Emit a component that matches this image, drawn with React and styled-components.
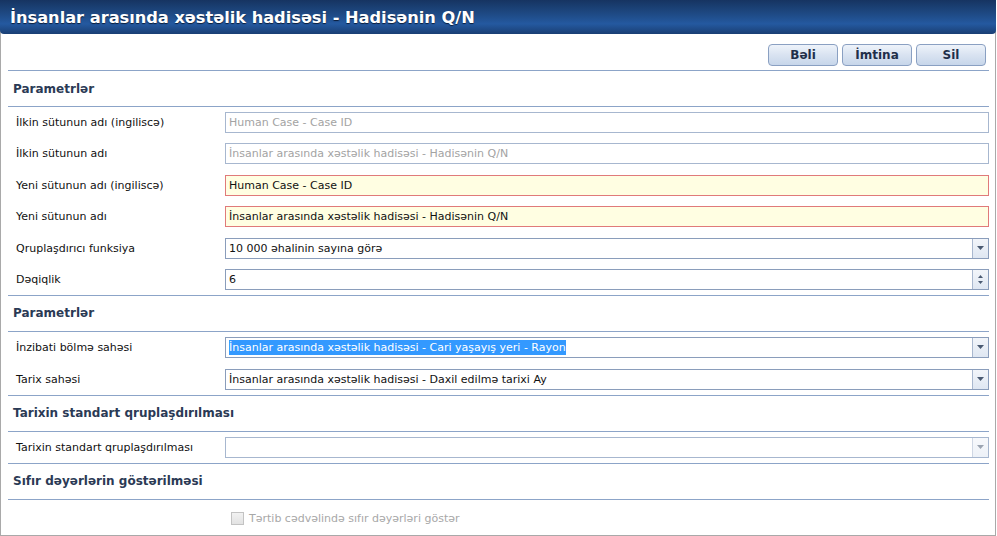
import React from "react";
import styled, { createGlobalStyle } from "styled-components";

const GlobalStyle = createGlobalStyle`
  body {
    margin: 0;
    background: #ffffff;
    font-family: "DejaVu Sans", Verdana, sans-serif;
  }
`;

const Window = styled.div`
  width: 994px;
  height: 535px;
  border: 1px solid #a9a9a9;
  border-top: none;
  display: flex;
  flex-direction: column;
`;

const TitleBar = styled.div`
  height: 34px;
  margin: 0 -1px;
  padding: 0 10px;
  display: flex;
  align-items: center;
  border-radius: 0 0 4px 4px;
  background: linear-gradient(#163461 0%, #1f4c88 45%, #2459a0 70%, #1a3f74 100%);
  color: #ffffff;
  font-size: 16.2px;
  font-weight: bold;
  text-shadow: 0 1px 1px #0b1d3a;
`;

const Content = styled.div`
  padding: 10px 6px 0 7px;
  display: flex;
  flex-direction: column;
`;

const Toolbar = styled.div`
  display: flex;
  justify-content: flex-end;
  gap: 4px;
  padding-right: 3px;
  padding-bottom: 4px;
  border-bottom: 1px solid #8ca4c8;
`;

const Button = styled.button`
  width: 70px;
  height: 22px;
  border: 1px solid #8aa0c2;
  border-radius: 4px;
  background: linear-gradient(#eef3fa, #d9e3f1 50%, #c7d6ea);
  color: #1f2f4a;
  font-family: inherit;
  font-size: 12px;
  font-weight: bold;
  padding: 0;
`;

const SectionHeader = styled.div`
  height: 35px;
  padding-left: 5px;
  display: flex;
  align-items: center;
  border-bottom: 1px solid #8ca4c8;
  color: #2b3a55;
  font-size: 12px;
  font-weight: bold;
`;

const Section = styled.div`
  padding: 5px 0 5px;
  display: flex;
  flex-direction: column;
  gap: ${(p) => p.$gap || 10}px;
  border-bottom: 1px solid #8ca4c8;
`;

const Row = styled.div`
  display: grid;
  grid-template-columns: 217px 1fr;
  align-items: center;
  height: 21px;
`;

const Label = styled.div`
  padding-left: 8px;
  font-size: 11px;
  color: #111111;
`;

const Field = styled.div`
  height: 19px;
  display: flex;
  align-items: center;
  border: 1px solid ${(p) => (p.$required ? "#e07a7a" : p.$disabled ? "#a7b7cf" : "#8a9dbb")};
  background: ${(p) => (p.$required ? "#fffee2" : "#ffffff")};
  color: ${(p) => (p.$disabled ? "#a3a3a3" : "#111111")};
  font-size: 11px;
  overflow: hidden;
`;

const FieldText = styled.span`
  flex: 1;
  padding-left: 3px;
  white-space: nowrap;
`;

const Selected = styled.span`
  background: #3399ff;
  color: #ffffff;
  padding: 1px 0;
`;

const SideButton = styled.div`
  width: 15px;
  align-self: stretch;
  border-left: 1px solid #a9b8cf;
  background: linear-gradient(#f2f5fa, #dfe7f2);
  display: flex;
  flex-direction: column;
  align-items: center;
  justify-content: center;
  gap: 3px;
  opacity: ${(p) => (p.$disabled ? 0.55 : 1)};
`;

const Arrow = ({ up, small }) => (
  <svg width={small ? 5 : 7} height={small ? 3 : 4} viewBox="0 0 7 4">
    <path d={up ? "M0 4 L3.5 0 L7 4 Z" : "M0 0 L7 0 L3.5 4 Z"} fill="#4a5a72" />
  </svg>
);

const CheckRow = styled.label`
  display: flex;
  align-items: center;
  gap: 5px;
  padding: 12px 0 0 223px;
  color: #a8a8a8;
  font-size: 11px;
`;

const Box = styled.span`
  width: 11px;
  height: 11px;
  border: 1px solid #c3c3c3;
  background: linear-gradient(#f2f2f2, #e2e2e2);
`;

function Select({ children, disabled }) {
  return (
    <Field $disabled={disabled}>
      <FieldText>{children}</FieldText>
      <SideButton $disabled={disabled}>
        <Arrow />
      </SideButton>
    </Field>
  );
}

export default function App() {
  return (
    <>
      <GlobalStyle />
      <Window>
        <TitleBar>İnsanlar arasında xəstəlik hadisəsi - Hadisənin Q/N</TitleBar>
        <Content>
          <Toolbar>
            <Button>Bəli</Button>
            <Button>İmtina</Button>
            <Button>Sil</Button>
          </Toolbar>

          <SectionHeader>Parametrlər</SectionHeader>
          <Section $gap={10.4}>
            <Row>
              <Label>İlkin sütunun adı (ingiliscə)</Label>
              <Field $disabled><FieldText>Human Case - Case ID</FieldText></Field>
            </Row>
            <Row>
              <Label>İlkin sütunun adı</Label>
              <Field $disabled><FieldText>İnsanlar arasında xəstəlik hadisəsi - Hadisənin Q/N</FieldText></Field>
            </Row>
            <Row>
              <Label>Yeni sütunun adı (ingiliscə)</Label>
              <Field $required><FieldText>Human Case - Case ID</FieldText></Field>
            </Row>
            <Row>
              <Label>Yeni sütunun adı</Label>
              <Field $required><FieldText>İnsanlar arasında xəstəlik hadisəsi - Hadisənin Q/N</FieldText></Field>
            </Row>
            <Row>
              <Label>Qruplaşdırıcı funksiya</Label>
              <Select>10 000 əhalinin sayına görə</Select>
            </Row>
            <Row>
              <Label>Dəqiqlik</Label>
              <Field>
                <FieldText>6</FieldText>
                <SideButton>
                  <Arrow up small />
                  <Arrow small />
                </SideButton>
              </Field>
            </Row>
          </Section>

          <SectionHeader>Parametrlər</SectionHeader>
          <Section $gap={11}>
            <Row>
              <Label>İnzibati bölmə sahəsi</Label>
              <Select>
                <Selected>İnsanlar arasında xəstəlik hadisəsi - Cari yaşayış yeri - Rayon</Selected>
              </Select>
            </Row>
            <Row>
              <Label>Tarix sahəsi</Label>
              <Select>İnsanlar arasında xəstəlik hadisəsi - Daxil edilmə tarixi Ay</Select>
            </Row>
          </Section>

          <SectionHeader>Tarixin standart qruplaşdırılması</SectionHeader>
          <Section>
            <Row>
              <Label>Tarixin standart qruplaşdırılması</Label>
              <Select disabled />
            </Row>
          </Section>

          <SectionHeader>Sıfır dəyərlərin göstərilməsi</SectionHeader>
          <CheckRow>
            <Box />
            Tərtib cədvəlində sıfır dəyərləri göstər
          </CheckRow>
        </Content>
      </Window>
    </>
  );
}
